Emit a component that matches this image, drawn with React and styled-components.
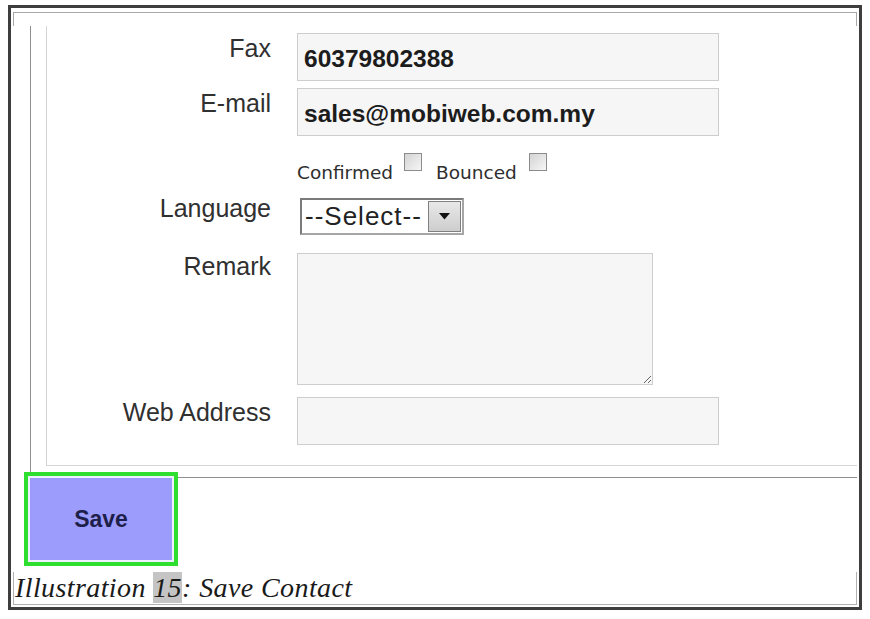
import React from "react";
import styled, { createGlobalStyle } from "styled-components";

const Global = createGlobalStyle`
  html, body { margin: 0; padding: 0; background: #fff; }
  body { font-family: "Liberation Sans", Arial, sans-serif; }
`;

const Frame = styled.div`
  box-sizing: border-box;
  width: 854px;
  height: 605px;
  margin: 5px 0 0 8px;
  border: 3px solid #3e3e3e;
  display: flex;
  flex-direction: column;
`;

const TopBracket = styled.div`
  box-sizing: border-box;
  margin: 4px 2px 0;
  height: 14px;
  border: 1px solid #a8a8a8;
  border-bottom: none;
`;

const OuterSet = styled.div`
  margin: 0 2px 0 19px;
  border-left: 1px solid #8e8e8e;
  border-bottom: 1px solid #8e8e8e;
  padding: 0 0 11px 15px;
`;

const Panel = styled.div`
  border-left: 1px solid #d4d4d4;
  border-bottom: 1px solid #d4d4d4;
  padding: 7px 0 20px 0;
  display: flex;
  flex-direction: column;
`;

const Row = styled.div`
  display: grid;
  grid-template-columns: 224px auto;
  column-gap: 26px;
  align-items: start;
  margin-top: ${(p) => p.$mt || 0}px;
`;

const Label = styled.div`
  text-align: right;
  font-size: 25px;
  line-height: 25px;
  color: #303030;
  margin-top: ${(p) => (p.$off ?? 3)}px;
`;

const TextField = styled.input`
  box-sizing: border-box;
  width: 422px;
  height: 48px;
  margin: 0;
  border: 1px solid #cdcdcd;
  background: #f6f6f6;
  padding: 4px 0 0 6px;
  font: bold 24.5px "Liberation Sans", Arial, sans-serif;
  color: #1c1c1c;
  outline: none;
`;

const CheckGroup = styled.div`
  display: flex;
  align-items: flex-start;
  height: 30px;
`;

const CheckText = styled.span`
  font: 18.5px/18.5px "DejaVu Sans", Verdana, sans-serif;
  color: #2e2e2e;
  margin-top: 11px;
  margin-right: ${(p) => p.$mr}px;
`;

const Check = styled.input.attrs({ type: "checkbox" })`
  appearance: none;
  box-sizing: border-box;
  margin: 0 ${(p) => p.$mr || 0}px 0 0;
  width: 18px;
  height: 18px;
  border: 1px solid #8c8c8c;
  background: linear-gradient(135deg, #d4d4d4, #f6f6f6);
`;

const SelectBox = styled.div`
  box-sizing: border-box;
  width: 164px;
  height: 37px;
  margin-left: 3px;
  border: 2px solid #8a8a8a;
  border-color: #7a7a7a #a6a6a6 #a6a6a6 #7a7a7a;
  padding: 1px;
  display: flex;
  background: #fff;
`;

const SelectText = styled.span`
  flex: 1;
  font-size: 26px;
  line-height: 30px;
  padding-left: 2px;
  color: #222;
  letter-spacing: 1px;
`;

const ArrowBtn = styled.span`
  box-sizing: border-box;
  width: 33px;
  display: flex;
  align-items: center;
  justify-content: center;
  border: 1px solid #808080;
  background: linear-gradient(#e8e8e8, #cdcdcd);
`;

const RemarkArea = styled.textarea`
  box-sizing: border-box;
  width: 356px;
  height: 132px;
  margin: 0;
  border: 1px solid #cdcdcd;
  background: #f6f6f6;
  resize: both;
  outline: none;
`;

const SaveButton = styled.button`
  align-self: flex-start;
  margin: 0 0 0 19px;
  width: 142px;
  height: 82px;
  border: none;
  background: #9c9cfd;
  box-shadow: 0 0 0 2px #eef0ff, 0 0 0 6px #2fdf2f;
  font: bold 23px "Liberation Sans", Arial, sans-serif;
  color: #1e1e4a;
  padding: 0;
`;

const Caption = styled.div`
  box-sizing: border-box;
  margin: 12px 2px 0;
  height: 33px;
  border: 1px solid #b0b0b0;
  border-top: none;
  padding: 2px 0 0 1px;
  font: italic 28px/28px "Liberation Serif", "Times New Roman", serif;
  letter-spacing: 0.4px;
  color: #1a1a1a;
  white-space: nowrap;
`;

const Shade = styled.span`
  background: #c4c4c4;
`;

export default function App() {
  return (
    <>
      <Global />
      <Frame>
        <TopBracket />
        <OuterSet>
          <Panel>
            <Row>
              <Label>Fax</Label>
              <TextField readOnly defaultValue="60379802388" />
            </Row>
            <Row $mt={7}>
              <Label>E-mail</Label>
              <TextField readOnly defaultValue="sales@mobiweb.com.my" />
            </Row>
            <Row $mt={17}>
              <div />
              <CheckGroup>
                <CheckText $mr={11}>Confirmed</CheckText>
                <Check $mr={14} />
                <CheckText $mr={12}>Bounced</CheckText>
                <Check />
              </CheckGroup>
            </Row>
            <Row $mt={15}>
              <Label $off={-2}>Language</Label>
              <SelectBox role="combobox">
                <SelectText>--Select--</SelectText>
                <ArrowBtn>
                  <svg width="11" height="7" viewBox="0 0 11 7">
                    <path d="M0 0 H11 L5.5 6.5 Z" fill="#111" />
                  </svg>
                </ArrowBtn>
              </SelectBox>
            </Row>
            <Row $mt={18}>
              <Label $off={1}>Remark</Label>
              <RemarkArea />
            </Row>
            <Row $mt={12}>
              <Label>Web Address</Label>
              <TextField readOnly defaultValue="" />
            </Row>
          </Panel>
        </OuterSet>
        <SaveButton>Save</SaveButton>
        <Caption>
          Illustration <Shade>15</Shade>: Save Contact
        </Caption>
      </Frame>
    </>
  );
}
